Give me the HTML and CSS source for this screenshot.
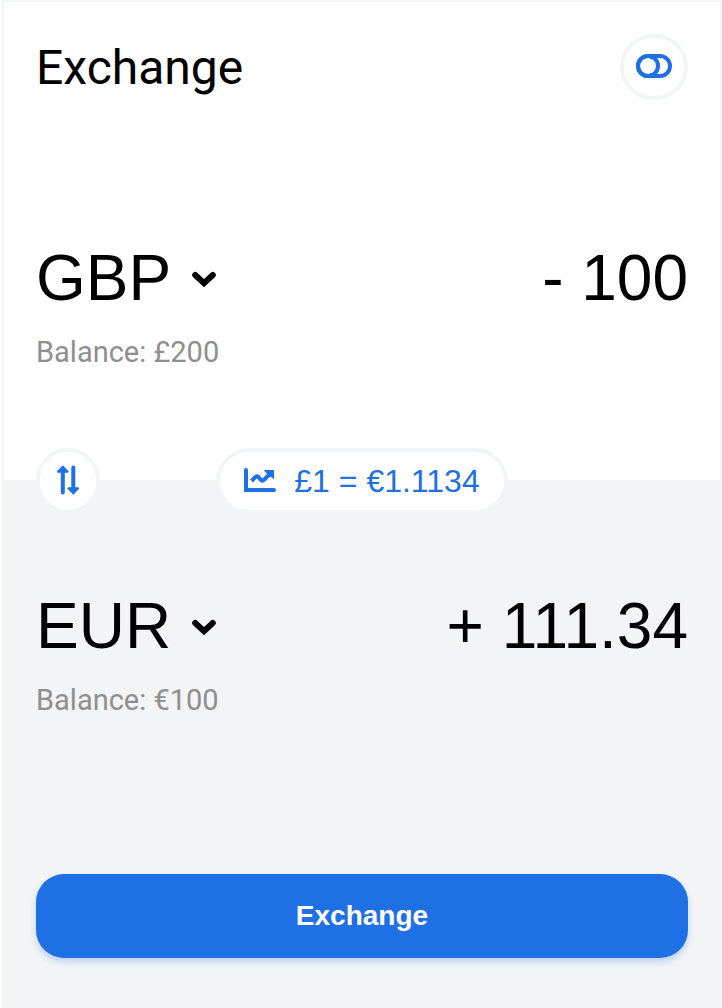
FILE: index.html
```
<!DOCTYPE html>
<html lang="en">
<head>
<meta charset="utf-8">
<meta name="viewport" content="width=device-width, initial-scale=1">
<title>Exchange</title>
<link rel="stylesheet" href="styles.css">
</head>
<body>
<form class="exchange">
  <section class="panel panel-from">
    <header class="header">
      <h1 class="title">Exchange</h1>
      <button class="pill toggle" type="button" aria-label="Switch mode">
        <svg width="36" height="24" viewBox="0 0 36 24" fill="none" stroke="currentColor" stroke-width="4">
          <rect x="2" y="2" width="32" height="20" rx="10"/>
          <circle cx="12" cy="12" r="10"/>
          <path d="M14 2.500H20M14 21.500H20" stroke-width="5"/>
        </svg>
      </button>
    </header>
    <div class="account">
      <div class="row">
        <div class="currency">
          <select class="currency-select" aria-label="Currency to sell">
            <option>GBP</option>
          </select>
          <svg class="chevron" width="24" height="18" viewBox="0 0 24 18" fill="none" stroke="currentColor" stroke-width="6" stroke-linecap="round"><path d="M3.200 5 12 13.200 20.800 5"/></svg>
        </div>
        <input class="amount" type="text" aria-label="Amount to sell" value="- 100">
      </div>
      <p class="balance">Balance: £200</p>
    </div>
  </section>

  <div class="controls">
    <button class="pill swap" type="button" aria-label="Swap currencies">
      <svg width="24" height="30" viewBox="0 0 24 30" fill="none" stroke="currentColor" stroke-width="4" stroke-linecap="round">
        <path d="M6.800 5V27.500M17.300 2.500V25"/>
        <path d="M6.800 1.600 11.600 6.800H2ZM17.300 28.400 12.500 23.200H22.100Z" fill="currentColor" stroke-width="2" stroke-linejoin="round"/>
      </svg>
    </button>
    <button class="pill rate" type="button">
      <svg class="rate-icon" width="32" height="24" viewBox="0 0 32 24" fill="none" stroke="currentColor" stroke-width="4">
        <path d="M2 2V22H30" stroke-linecap="round"/>
        <path d="M7.500 13 11.500 9Q13 7.500 14.500 9L16.800 12Q18.200 13.500 19.700 12L26 6"/>
        <path d="M20.500 2.500H29.500V10.500L27 8.500 23.500 6Z" fill="currentColor" stroke-width="1" stroke-linejoin="round"/>
      </svg>
      <span>£1 = €1.1134</span>
    </button>
  </div>

  <section class="panel panel-to">
    <div class="account">
      <div class="row">
        <div class="currency">
          <select class="currency-select" aria-label="Currency to buy">
            <option>EUR</option>
          </select>
          <svg class="chevron" width="24" height="18" viewBox="0 0 24 18" fill="none" stroke="currentColor" stroke-width="6" stroke-linecap="round"><path d="M3.200 5 12 13.200 20.800 5"/></svg>
        </div>
        <input class="amount" type="text" aria-label="Amount to buy" value="+ 111.34">
      </div>
      <p class="balance">Balance: €100</p>
    </div>
    <button class="submit" type="submit">Exchange</button>
  </section>
</form>
</body>
</html>
```
FILE: styles.css
```
* {
  box-sizing: border-box;
}

body {
  margin: 0;
  background: #fff;
  color: #000;
  font-family: Roboto, sans-serif;
}

button,
input,
select {
  margin: 0;
  font-family: "Liberation Sans", Arial, sans-serif;
}

.exchange {
  display: flex;
  flex-direction: column;
  min-height: 100vh;
  margin-left: 2px;
}

.panel {
  border: 2px solid #f2f4f6;
  padding: 32px;
}

.panel-from {
  border-bottom: 0;
  padding-bottom: 112px;
}

.header {
  display: flex;
  align-items: center;
  justify-content: space-between;
  margin-bottom: 136px;
}

.title {
  margin: 0;
  padding-top: 2px;
  font-size: 48px;
  font-weight: 400;
  line-height: 64px;
}

.pill {
  display: flex;
  align-items: center;
  justify-content: center;
  height: 66px;
  padding: 0;
  border: 4px solid #f2f4f6;
  border-radius: 33px;
  background: #fff;
  color: #1f6fe5;
}

.toggle {
  width: 68px;
  padding-bottom: 2px;
}

.row {
  display: flex;
  align-items: center;
  justify-content: space-between;
  margin-bottom: 16px;
}

.currency {
  display: flex;
  align-items: center;
}

.currency-select {
  appearance: none;
  height: 84px;
  padding: 0 40px 0 0;
  border: 0;
  background: transparent;
  color: inherit;
  font-size: 64px;
}

.chevron {
  margin-top: 2px;
  margin-left: -20px;
  pointer-events: none;
}

.amount {
  flex: 1;
  min-width: 0;
  height: 84px;
  padding: 0;
  border: 0;
  background: transparent;
  color: inherit;
  font-size: 64px;
  text-align: right;
}

.balance {
  margin: 0;
  color: #8f8f8f;
  font-size: 29px;
  line-height: 32px;
}

.controls {
  display: grid;
  grid-template-columns: 1fr auto 1fr;
  align-items: center;
  z-index: 1;
  margin: -32px 0 -34px;
  padding: 0 34px;
}

.swap {
  width: 64px;
  padding-bottom: 2px;
}

.rate {
  gap: 18px;
  padding: 0 24px;
  font-size: 32px;
}

.rate-icon {
  margin-bottom: 2px;
}

.panel-to {
  display: flex;
  flex: 1;
  flex-direction: column;
  justify-content: space-between;
  padding: 102px 32px 48px;
  background: #f2f4f6;
}

.submit {
  width: 100%;
  height: 84px;
  padding: 0;
  border: 0;
  border-radius: 28px;
  background: #1f6fe5;
  box-shadow: 0 4px 6px rgba(31, 111, 229, 0.25);
  color: #fff;
  font-size: 28px;
  font-weight: 700;
}
```
